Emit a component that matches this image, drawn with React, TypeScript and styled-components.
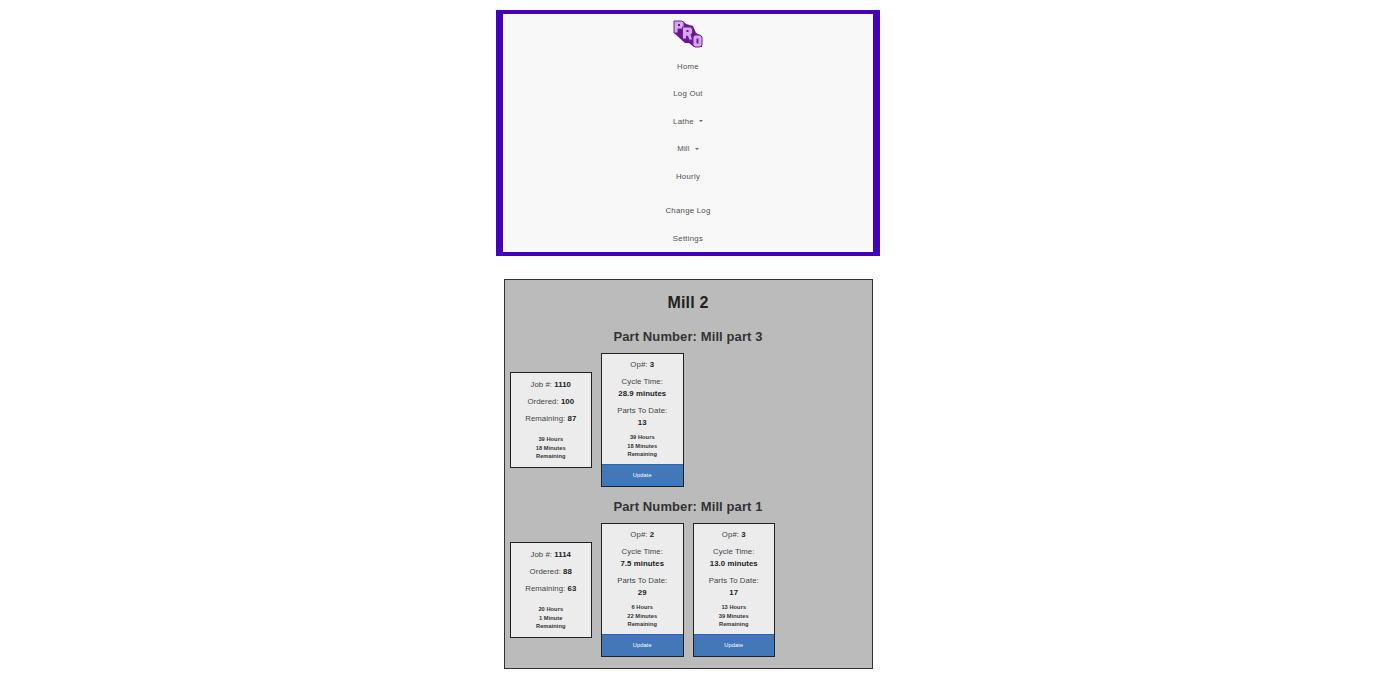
import React from "react";
import styled, { createGlobalStyle } from "styled-components";

const GlobalStyle = createGlobalStyle`
  * { box-sizing: border-box; }
  body {
    margin: 0;
    background: #fff;
    font-family: "Liberation Sans", Arial, sans-serif;
    color: #333;
  }
`;

const Page = styled.div`
  width: 1376px;
  height: 700px;
  padding-top: 9.5px;
  display: flex;
  flex-direction: column;
  align-items: center;
  overflow: hidden;
`;

const Nav = styled.nav`
  width: 384px;
  height: 246px;
  flex: none;
  border: solid #4200b8;
  border-width: 4px 7px;
  background: #f8f8f8;
  display: flex;
  flex-direction: column;
  align-items: center;
  padding-top: 5px;
`;

const Logo = styled.svg`
  width: 32px;
  height: 30px;
  flex: none;
  margin-bottom: 4px;
`;

const NavItem = styled.a<{ $gapBefore?: boolean }>`
  height: 27.6px;
  line-height: 27.6px;
  flex: none;
  margin-top: ${(p) => (p.$gapBefore ? "6.9px" : "0")};
  font-size: 7.8px;
  letter-spacing: 0.26px;
  color: #505050;
  display: flex;
  align-items: center;
`;

const Caret = styled.span`
  margin-left: 5px;
  border: solid transparent;
  border-width: 2px 2px 0;
  border-top-color: #666;
`;

const Panel = styled.main`
  width: 369px;
  height: 390px;
  flex: none;
  margin-top: 23.5px;
  border: 1px solid #333;
  background: #bbb;
  padding: 12px 5px 0;
`;

const Title = styled.h1`
  margin: 0;
  height: 22px;
  line-height: 22px;
  text-align: center;
  font-size: 16px;
  letter-spacing: 0.15px;
  color: #222;
`;

const Part = styled.section`
  height: 170px;
  padding-top: 14px;
`;

const PartTitle = styled.h2`
  margin: 0;
  height: 18px;
  line-height: 18px;
  text-align: center;
  font-size: 13px;
  letter-spacing: 0.1px;
  color: #333;
`;

const Cards = styled.div`
  height: 134px;
  margin-top: 7px;
  display: flex;
  align-items: center;
  gap: 9px;
`;

const Card = styled.article<{ $tall?: boolean }>`
  width: 82.5px;
  height: ${(p) => (p.$tall ? "134px" : "96px")};
  margin-top: ${(p) => (p.$tall ? "0" : "-1px")};
  border: 1px solid #222;
  background: #ececec;
  display: flex;
  flex-direction: column;
  text-align: center;
  padding-top: ${(p) => (p.$tall ? "5px" : "3px")};
`;

const Line = styled.div<{ $height?: number; $top?: number }>`
  height: ${(p) => p.$height ?? 12}px;
  line-height: ${(p) => p.$height ?? 12}px;
  margin-top: ${(p) => p.$top ?? 0}px;
  font-size: 7.8px;
  letter-spacing: 0.06px;
  white-space: nowrap;
  color: #444;
  b { color: #222; }
`;

const Remaining = styled.div<{ $top: number }>`
  margin-top: ${(p) => p.$top}px;
  font-size: 5.7px;
  font-weight: bold;
  line-height: 8.5px;
  letter-spacing: 0.05px;
  color: #333;
`;

const Update = styled.button`
  margin-top: auto;
  height: 22px;
  flex: none;
  border: 0;
  border-top: 1px solid #2868ae;
  padding: 0 0 2px;
  background: #4277b8;
  color: #fff;
  font: 5.7px "Liberation Sans", Arial, sans-serif;
  letter-spacing: 0.1px;
`;

type Op = { id: number; cycle: string; parts: number; left: string[] };
type Job = { part: string; id: string; ordered: number; remaining: number; left: string[]; ops: Op[] };

const jobs: Job[] = [
  {
    part: "Mill part 3", id: "1110", ordered: 100, remaining: 87, left: ["39 Hours", "18 Minutes"],
    ops: [{ id: 3, cycle: "28.9", parts: 13, left: ["39 Hours", "18 Minutes"] }],
  },
  {
    part: "Mill part 1", id: "1114", ordered: 88, remaining: 63, left: ["20 Hours", "1 Minute"],
    ops: [
      { id: 2, cycle: "7.5", parts: 29, left: ["6 Hours", "22 Minutes"] },
      { id: 3, cycle: "13.0", parts: 17, left: ["13 Hours", "39 Minutes"] },
    ],
  },
];

const letters = [
  { x: 2, y: 2, d: "M0 0H8L10 2V6L8 8H4V12H0Z", hole: "M4 3H6V5H4Z" },
  { x: 10.5, y: 8, d: "M0 0H8L10 2V6L8.5 7.5L10 13H6.5L5 9H4V12H0Z", hole: "M4 3H6V5H4Z" },
  { x: 21, y: 16, d: "M2 0H7L9 2V10L7 12H2L0 10V2Z", hole: "M3.5 3.5H5.5V8.5H3.5Z" },
];

const ProLogo = () => (
  <Logo viewBox="0 0 32 30">
    <path d="M2 2H11L14 5L21 7L24 14L30 17V28H22L17 24H13L2 14Z" fill="#6a1690" />
    {letters.map((l) => (
      <g key={l.x} transform={`translate(${l.x} ${l.y})`}>
        <path d={l.d} fill="#dba4f4" stroke="#6d2490" strokeWidth="1" />
        <path d={l.hole} fill="#6a1690" />
      </g>
    ))}
  </Logo>
);

const TimeLeft = ({ left, top }: { left: string[]; top: number }) => (
  <Remaining $top={top}>
    {left.map((t) => <div key={t}>{t}</div>)}
    <div>Remaining</div>
  </Remaining>
);

export default function App() {
  return (
    <Page>
      <GlobalStyle />
      <Nav>
        <ProLogo />
        <NavItem>Home</NavItem>
        <NavItem>Log Out</NavItem>
        <NavItem>Lathe<Caret /></NavItem>
        <NavItem>Mill<Caret /></NavItem>
        <NavItem>Hourly</NavItem>
        <NavItem $gapBefore>Change Log</NavItem>
        <NavItem>Settings</NavItem>
      </Nav>
      <Panel>
        <Title>Mill 2</Title>
        {jobs.map((job) => (
          <Part key={job.id}>
            <PartTitle>Part Number: {job.part}</PartTitle>
            <Cards>
              <Card>
                <Line $height={17.3}>Job #: <b>{job.id}</b></Line>
                <Line $height={17.3}>Ordered: <b>{job.ordered}</b></Line>
                <Line $height={17.3}>Remaining: <b>{job.remaining}</b></Line>
                <TimeLeft left={job.left} top={8} />
              </Card>
              {job.ops.map((op) => (
                <Card $tall key={op.id}>
                  <Line>Op#: <b>{op.id}</b></Line>
                  <Line $top={5}>Cycle Time:</Line>
                  <Line><b>{op.cycle} minutes</b></Line>
                  <Line $top={5}>Parts To Date:</Line>
                  <Line><b>{op.parts}</b></Line>
                  <TimeLeft left={op.left} top={4} />
                  <Update>Update</Update>
                </Card>
              ))}
            </Cards>
          </Part>
        ))}
      </Panel>
    </Page>
  );
}
